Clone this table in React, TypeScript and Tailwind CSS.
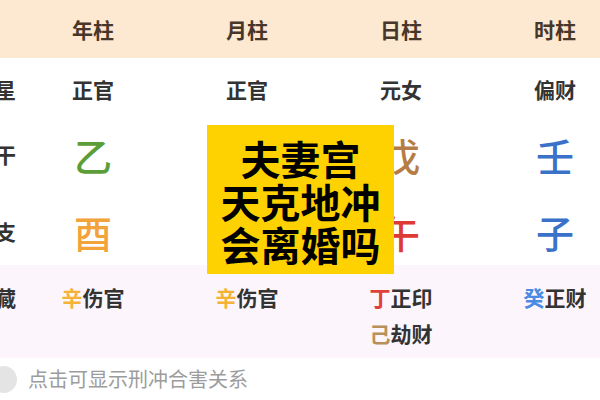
const cols = [
  { title: "年柱", shen: "正官", gan: "乙", ganColor: "text-[#5b9d36]", zhi: "酉", zhiColor: "text-[#f2a33a]" },
  { title: "月柱", shen: "正官", gan: "", ganColor: "", zhi: "", zhiColor: "" },
  { title: "日柱", shen: "元女", gan: "戊", ganColor: "text-[#b57c45]", zhi: "午", zhiColor: "text-[#de3a34]" },
  { title: "时柱", shen: "偏财", gan: "壬", ganColor: "text-[#3b72c9]", zhi: "子", zhiColor: "text-[#3b72c9]" },
];

const hidden: { stem: string; color: string; god: string }[][] = [
  [{ stem: "辛", color: "text-[#f5b335]", god: "伤官" }],
  [{ stem: "辛", color: "text-[#f5b335]", god: "伤官" }],
  [
    { stem: "丁", color: "text-[#e0403a]", god: "正印" },
    { stem: "己", color: "text-[#b8915a]", god: "劫财" },
  ],
  [{ stem: "癸", color: "text-[#4a8be3]", god: "正财" }],
];

const row = "grid grid-cols-[36px_154px_154px_154px_154px] -ml-[20px]";
const label = "flex justify-end whitespace-nowrap text-[21px] font-semibold text-[#333]";

export default function App() {
  return (
    <div className="relative h-[400px] w-[600px] overflow-hidden bg-white font-['Noto_Sans_CJK_SC','Noto_Sans',sans-serif]">
      <div className="bg-[#fde8d1]">
        <div className={`${row} h-[58px] items-center text-[21px] font-semibold text-[#47372a]`}>
          <div />
          {cols.map((c) => (
            <div key={c.title} className="pt-[1px] text-center">
              {c.title}
            </div>
          ))}
        </div>
      </div>

      <div className={`${row} h-[64px] items-center text-[21px] font-semibold text-[#333]`}>
        <div className={label}>主星</div>
        {cols.map((c, i) => (
          <div key={i} className="text-center">
            {c.shen}
          </div>
        ))}
      </div>

      <div className={`${row} h-[66px] items-center`}>
        <div className={label}>天干</div>
        {cols.map((c, i) => (
          <div key={i} className={`text-center text-[38px] leading-none font-medium ${c.ganColor}`}>
            {c.gan}
          </div>
        ))}
      </div>

      <div className={`${row} h-[77px] items-center pt-[11px]`}>
        <div className={label}>地支</div>
        {cols.map((c, i) => (
          <div key={i} className={`text-center text-[38px] leading-none font-medium ${c.zhiColor}`}>
            {c.zhi}
          </div>
        ))}
      </div>

      <div className="bg-[#fcf5fc]">
        <div className={`${row} h-[93px] items-start pt-[14px] text-[21px] leading-[36px] font-semibold text-[#333]`}>
          <div className={label}>暗藏</div>
          {hidden.map((list, i) => (
            <div key={i} className="flex justify-center">
              <div className="flex flex-col">
                {list.map((h) => (
                  <div key={h.stem}>
                    <span className={h.color}>{h.stem}</span>
                    {h.god}
                  </div>
                ))}
              </div>
            </div>
          ))}
        </div>
      </div>

      <div className="flex h-[42px] items-center">
        <div className="-ml-[10px] h-[27px] w-[27px] rounded-full bg-[#e4e4e4]" />
        <span className="ml-[11px] text-[20px] text-[#9c9c9c]">点击可显示刑冲合害关系</span>
      </div>

      <div className="absolute left-[207px] top-[125px] flex h-[149px] w-[187px] flex-col items-center justify-center bg-[#fdd200] pt-[3px] text-[40px] leading-[43px] font-semibold text-black">
        <div>夫妻宫</div>
        <div>天克地冲</div>
        <div>会离婚吗</div>
      </div>
    </div>
  );
}
